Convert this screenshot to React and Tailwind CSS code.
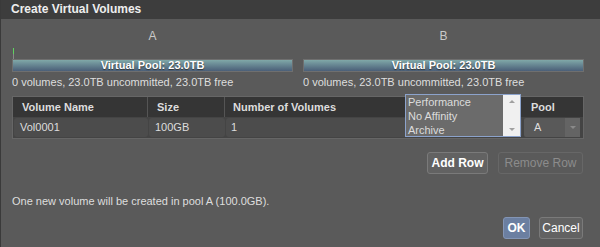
import React from 'react';

const PoolBar = ({ label, marker }) => (
  <div className="flex flex-col items-stretch">
    <div className="text-center text-[12px] text-[#c9c9c9] h-[14px] leading-[14px]">{label}</div>
    <div className="relative h-[16px]">
      {marker && (
        <>
          <div className="absolute left-[1px] top-[5px] h-[6px] w-[1px] bg-[#5fd35f]" />
          <div className="absolute left-[1px] top-[11px] h-[5px] w-[1px] bg-[#8a8a8a]" />
        </>
      )}
    </div>
    <div className="h-[13px] border border-[#6f6f6f] bg-gradient-to-b from-[#80a8a8] to-[#4b5f78] text-center text-[11px] font-bold leading-[11px] text-white [text-shadow:0_1px_1px_#333]">
      Virtual Pool: 23.0TB
    </div>
    <div className="mt-[3px] text-[11px] leading-[14px] text-[#dedede]">0 volumes, 23.0TB uncommitted, 23.0TB free</div>
  </div>
);

const App = () => {
  return (
    <div className="w-[600px] h-[247px] bg-[#5a5a5a] border-l border-[#3a3a3a] overflow-hidden font-['Liberation_Sans',Arial,sans-serif]">
      <div className="h-[19px] bg-[#3d3d3d] pl-[10px] text-[12px] font-bold leading-[19px] text-[#eeeeee]">
        Create Virtual Volumes
      </div>

      <div className="px-[11px]">
        <div className="grid w-[572px] grid-cols-2 gap-[10px] pt-[10px]">
          <PoolBar label="A" marker />
          <PoolBar label="B" />
        </div>

        <div className="relative mt-[7px] w-[572px] border border-[#666666] bg-[#4a4a4a]">
          <div className="flex h-[20px] bg-[#353535] text-[11px] font-bold leading-[20px] text-[#dddddd]">
            <div className="w-[135px] border-r border-[#555555] pl-[9px]">Volume Name</div>
            <div className="w-[77px] border-r border-[#555555] pl-[9px]">Size</div>
            <div className="w-[296px] border-r border-[#555555] pl-[8px]">Number of Volumes</div>
            <div className="flex-1 pl-[10px]">Pool</div>
          </div>
          <div className="flex h-[21px] gap-[1px] bg-[#444444] p-[1px] text-[11px] leading-[19px] text-[#dddddd]">
            <div className="w-[134px] rounded-[3px] bg-[#4c4c4c] pl-[6px]">Vol0001</div>
            <div className="w-[76px] rounded-[3px] bg-[#4c4c4c] pl-[6px]">100GB</div>
            <div className="w-[296px] rounded-[3px] bg-[#4c4c4c] pl-[5px]">1</div>
            <div className="flex flex-1 items-stretch pl-[1px] pr-[2px]">
              <div className="flex flex-1 rounded-[2px] bg-[#595959]">
                <span className="flex-1 pl-[10px]">A</span>
                <span className="flex w-[15px] items-center justify-center bg-[#646464]">
                  <span className="h-0 w-0 border-x-[3px] border-t-[3px] border-x-transparent border-t-[#8a8a8a]" />
                </span>
              </div>
            </div>
          </div>

          <div className="absolute left-[392px] top-[-3px] flex h-[43px] w-[116px] border border-[#8ca3cc] bg-[#6b6b6b] text-[11px] leading-[14px] text-[#dcdcdc]">
            <div className="flex-1 pl-[2px]">
              <div>Performance</div>
              <div>No Affinity</div>
              <div>Archive</div>
            </div>
            <div className="flex w-[17px] flex-col items-center justify-between bg-[#f0f0f0] py-[5px]">
              <span className="h-0 w-0 border-x-[3px] border-b-[3px] border-x-transparent border-b-[#a0a0a0]" />
              <span className="h-0 w-0 border-x-[3px] border-t-[3px] border-x-transparent border-t-[#a0a0a0]" />
            </div>
          </div>
        </div>

        <div className="mt-[13px] flex w-[572px] justify-end gap-[10px] pr-[1px]">
          <button className="h-[22px] w-[61px] rounded-[3px] border border-[#7a7a7a] bg-[#626262] text-[12px] font-bold text-white">
            Add Row
          </button>
          <button className="h-[22px] w-[85px] rounded-[3px] border border-[#676767] bg-[#5a5a5a] text-[12px] text-[#8c8c8c]">
            Remove Row
          </button>
        </div>

        <div className="mt-[20px] text-[11px] leading-[14px] text-[#dedede]">
          One new volume will be created in pool A (100.0GB).
        </div>

        <div className="mt-[9px] flex w-[572px] justify-end gap-[9px] pr-[1px]">
          <button className="h-[22px] w-[27px] rounded-[3px] border border-[#8395b5] bg-[#6b7fa1] text-[12px] font-bold text-white">
            OK
          </button>
          <button className="h-[22px] w-[44px] rounded-[3px] border border-[#7a7a7a] bg-[#626262] text-[12px] text-white">
            Cancel
          </button>
        </div>
      </div>
    </div>
  );
};

export default App;
